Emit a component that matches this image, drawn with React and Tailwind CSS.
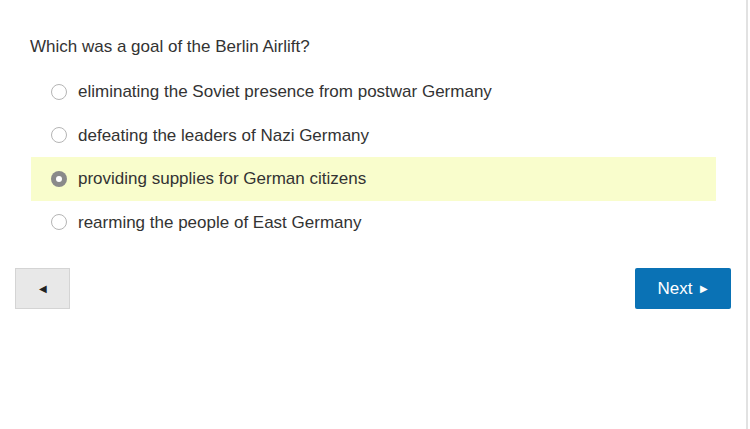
import React from "react";

const options = [
  "eliminating the Soviet presence from postwar Germany",
  "defeating the leaders of Nazi Germany",
  "providing supplies for German citizens",
  "rearming the people of East Germany",
];

function Radio({ checked }) {
  if (checked) {
    return (
      <span className="flex h-4 w-4 shrink-0 items-center justify-center rounded-full bg-[#8a8a8a]">
        <span className="h-[6px] w-[6px] rounded-full bg-white" />
      </span>
    );
  }
  return <span className="h-4 w-4 shrink-0 rounded-full border border-[#b5b5b5] bg-white" />;
}

export default function App() {
  const selected = 2;
  return (
    <div className="h-[429px] w-[748px] border-r-2 border-[#e2e2e2] bg-white font-['Liberation_Sans',Arial,sans-serif] text-[#333333]">
      <div className="pt-[35px] pl-[30px] text-[17px] leading-6">Which was a goal of the Berlin Airlift?</div>
      <div className="mt-[11px] ml-[31px] w-[685px] flex flex-col">
        {options.map((o, i) => (
          <div
            key={i}
            className={
              "flex h-[43.5px] items-center gap-[11px] pl-[20px] text-[17px] " +
              (i === selected ? "bg-[#f9fdcc]" : "")
            }
          >
            <Radio checked={i === selected} />
            <span>{o}</span>
          </div>
        ))}
      </div>
      <div className="mt-[24px] flex items-center justify-between pl-[15px] pr-[15px]">
        <button className="flex h-[41px] w-[55px] items-center justify-center border border-[#d4d4d4] bg-[#e8e8e8] text-[10px] text-[#222]">
          ◀
        </button>
        <button className="flex h-[41px] w-[96px] items-center justify-center gap-[8px] rounded-[2px] bg-[#0a72b5] text-[17px] text-white">
          <span>Next</span>
          <span className="text-[10px]">▶</span>
        </button>
      </div>
    </div>
  );
}
